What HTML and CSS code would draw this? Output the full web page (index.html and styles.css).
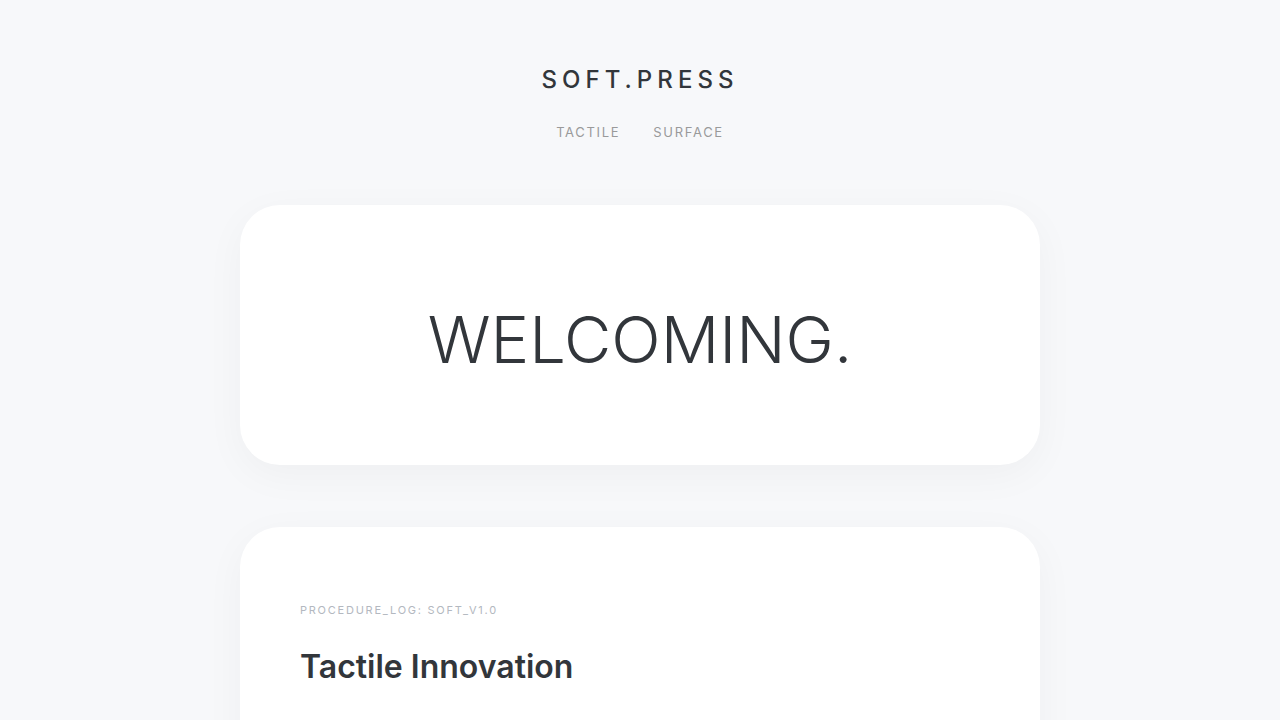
FILE: index.html
```html
<!DOCTYPE html>
<html lang="en">
<head>
    <meta charset="UTF-8">
    <meta name="viewport" content="width=device-width, initial-scale=1.0">
    <title>Soft.Press</title>
    <link rel="stylesheet" href="styles.css">
</head>
<body>
    <header class="site-header">
        <div class="logo">SOFT.PRESS</div>
        <nav class="nav">
            <a href="#">TACTILE</a>
            <a href="#">SURFACE</a>
        </nav>
    </header>

    <main class="content">
        <section class="card hero">
            <h1>WELCOMING.</h1>
        </section>

        <section class="card article">
            <p class="label">PROCEDURE_LOG: SOFT_V1.0</p>
            <h2>Tactile Innovation</h2>
        </section>
    </main>
</body>
</html>
```

FILE: styles.css
```css
:root {
    --bg-color: #f7f8fa;
    --card-color: #ffffff;
    --text-color: #32363b;
    --muted-color: #9a9a9a;
    --label-color: #b3b8c0;
}
body {
    font-family: Inter, "Noto Sans", sans-serif;
    background-color: var(--bg-color);
    color: var(--text-color);
    margin: 0;
    padding: 0;
}
.site-header {
    display: flex;
    flex-direction: column;
    align-items: center;
    padding-top: 64px;
}
.logo {
    font-size: 24px;
    font-weight: 500;
    letter-spacing: 0.21em;
    line-height: 32px;
}
.nav {
    display: flex;
    gap: 33px;
    margin-top: 28px;
}
.nav a {
    color: var(--muted-color);
    text-decoration: none;
    font-size: 13px;
    letter-spacing: 0.13em;
    line-height: 16px;
}
.content {
    width: 800px;
    margin: 65px auto 0;
    display: flex;
    flex-direction: column;
    gap: 62px;
}
.card {
    background-color: var(--card-color);
    border-radius: 40px;
    box-shadow: 0 10px 40px rgba(0, 0, 0, 0.04);
}
.hero {
    height: 260px;
    box-sizing: border-box;
    padding-top: 8px;
    display: flex;
    justify-content: center;
    align-items: center;
}
.hero h1 {
    margin: 0;
    font-size: 65px;
    font-weight: 300;
    letter-spacing: 0;
}
.article {
    padding: 76px 60px 60px;
    min-height: 300px;
}
.label {
    margin: 0;
    font-size: 11px;
    letter-spacing: 0.16em;
    color: var(--label-color);
}
.article h2 {
    margin: 30px 0 0;
    font-size: 32px;
    font-weight: 600;
    letter-spacing: 0;
}
```
